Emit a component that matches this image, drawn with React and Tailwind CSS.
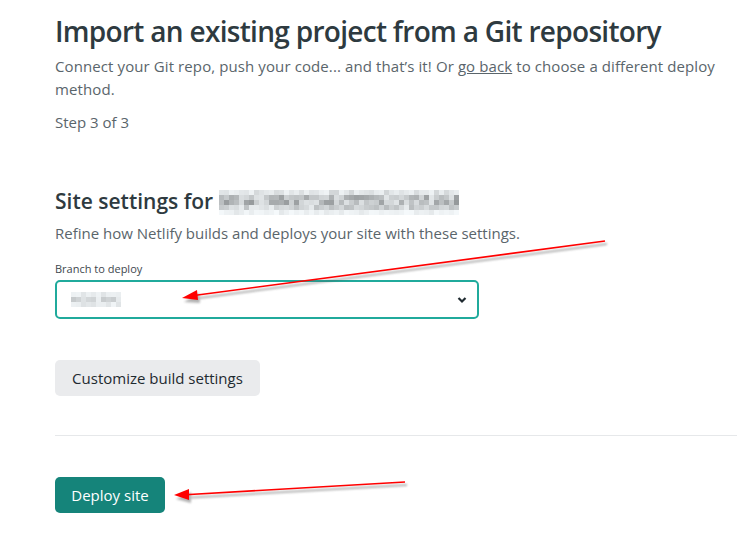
import React from "react";

function seeded(n, seed) {
  const out = [];
  let s = seed;
  for (let i = 0; i < n; i++) {
    s = (s * 9301 + 49297) % 233280;
    out.push(s / 233280);
  }
  return out;
}

function Mosaic({ cols, rows, size, weights, seed, className, strength = 110 }) {
  const r = seeded(cols * rows, seed);
  const cells = [];
  for (let y = 0; y < rows; y++) {
    for (let x = 0; x < cols; x++) {
      const v = r[y * cols + x];
      const w = weights[y];
      const light = Math.round(255 - w * (30 + v * strength));
      const c = `rgb(${light - 4},${light},${light + 2})`;
      cells.push(<rect key={`${x}-${y}`} x={x * size} y={y * size} width={size} height={size} fill={c} />);
    }
  }
  return (
    <svg className={className} width={cols * size} height={rows * size} viewBox={`0 0 ${cols * size} ${rows * size}`}>
      {cells}
    </svg>
  );
}

function Arrows() {
  return (
    <svg className="absolute left-0 top-0 pointer-events-none" width="737" height="559" viewBox="0 0 737 559">
      <defs>
        <filter id="blur" x="-10%" y="-50%" width="120%" height="200%">
          <feGaussianBlur stdDeviation="1.2" />
        </filter>
      </defs>
      <g filter="url(#blur)" opacity="0.45">
        <line x1="607" y1="244" x2="192" y2="299" stroke="#555" strokeWidth="2" />
        <polygon points="184,302 199,293 200,303" fill="#555" />
        <line x1="407" y1="485" x2="183" y2="498" stroke="#555" strokeWidth="2" />
        <polygon points="176,499 191,492 191,503" fill="#555" />
      </g>
      <line x1="605" y1="241" x2="190" y2="296" stroke="#f00" strokeWidth="1.6" />
      <polygon points="182,298 197,290 198,300" fill="#f00" />
      <line x1="405" y1="482" x2="181" y2="495" stroke="#f00" strokeWidth="1.6" />
      <polygon points="174,495 189,489 189,500" fill="#f00" />
    </svg>
  );
}

export default function App() {
  return (
    <div className="relative w-[737px] h-[559px] overflow-hidden bg-white font-['Open_Sans',sans-serif] text-[#2e3a40]">
      <div className="pl-[55px] pt-[11px]">
        <h1 className="text-[28px] leading-[40px] font-semibold tracking-[-0.7px] text-[#2e3a40] whitespace-nowrap">
          Import an existing project from a Git repository
        </h1>
        <p className="mt-[4px] text-[15px] leading-[23px] tracking-[0.1px] text-[#5a656b] pr-[10px]">
          Connect your Git repo, push your code... and that’s it! Or <span className="underline">go back</span> to choose a different deploy method.
        </p>
        <p className="mt-[10px] text-[15px] leading-[23px] text-[#5a656b]">Step 3 of 3</p>

        <div className="mt-[52px] flex items-center gap-[6px]">
          <h2 className="text-[21px] leading-[30px] font-semibold text-[#2e3a40]">Site settings for</h2>
          <Mosaic className="mt-[2px]" cols={48} rows={5} size={5} weights={[0.35, 0.8, 0.9, 0.55, 0.2]} seed={7} strength={90} />
        </div>
        <p className="mt-[6px] text-[15px] leading-[23px] text-[#5a656b]">
          Refine how Netlify builds and deploys your site with these settings.
        </p>

        <label className="block mt-[17px] text-[11px] leading-[14px] text-[#3e484e]">Branch to deploy</label>
        <div className="mt-[4px] w-[424px] h-[39px] rounded-[5px] border-2 border-[#20aa9c] flex items-center justify-between pl-[14px] pr-[10px]">
          <Mosaic cols={10} rows={3} size={5} weights={[0.25, 0.5, 0.3]} seed={3} strength={80} />
          <svg width="10" height="8" viewBox="0 0 10 8">
            <path d="M1.5 2 L5 5.5 L8.5 2" fill="none" stroke="#1f2a30" strokeWidth="2.2" />
          </svg>
        </div>

        <button className="mt-[41px] h-[36px] w-[205px] rounded-[5px] bg-[#eaebed] text-[15px] text-[#1f2a30]">
          Customize build settings
        </button>

        <div className="mt-[39px] h-px bg-[#e6e8ea]" />

        <button className="mt-[41px] h-[36px] w-[110px] rounded-[5px] bg-[#15847a] text-[15px] text-white">
          Deploy site
        </button>
      </div>
      <Arrows />
    </div>
  );
}
